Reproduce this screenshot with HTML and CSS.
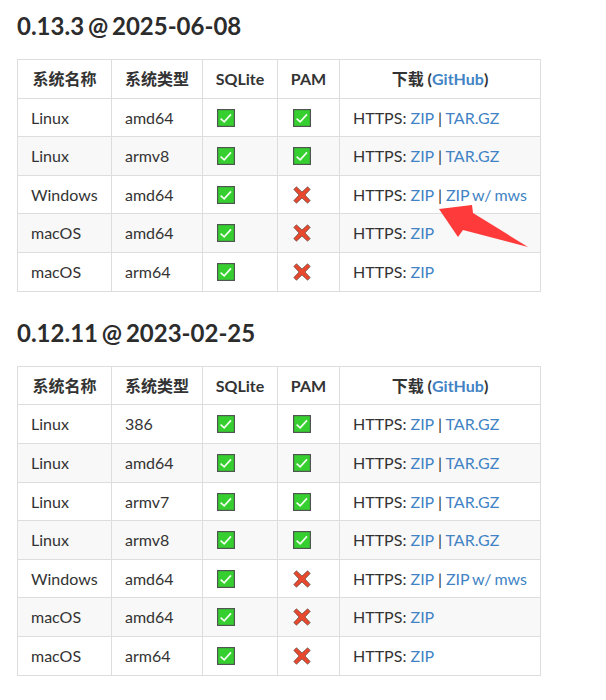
FILE: index.html
```html
<!DOCTYPE html>
<html lang="zh">
<head>
<meta charset="utf-8">
<title>Downloads</title>
<link rel="stylesheet" href="styles.css">
</head>
<body>
<svg width="0" height="0" class="defs">
  <symbol id="yes" viewBox="0 0 18 18">
    <rect x="0.6" y="0.6" width="16.8" height="16.8" fill="#35d02f" stroke="#4f554f" stroke-width="1.2"/>
    <path d="M3.6 9.6 L7.2 12.8 L14 5.4" fill="none" stroke="#f4fff2" stroke-width="1.7"/>
  </symbol>
  <symbol id="no" viewBox="0 0 18 18">
    <path d="M0.8 3.4 L3.4 0.8 L9 6 L14.6 0.8 L17.2 3.4 L12 9 L17.2 14.6 L14.6 17.2 L9 12 L3.4 17.2 L0.8 14.6 L6 9 Z" fill="#e8492e" stroke="#5c4a44" stroke-width="0.7"/>
  </symbol>
</svg>

<section class="release">
  <h2>0.13.3 @ 2025-06-08</h2>
  <table>
    <thead>
      <tr><th class="c1">系统名称</th><th class="c2">系统类型</th><th class="c3">SQLite</th><th class="c4">PAM</th><th class="c5">下载 (<a href="#">GitHub</a>)</th></tr>
    </thead>
    <tbody>
      <tr><td>Linux</td><td>amd64</td><td><svg class="ico"><use href="#yes"/></svg></td><td class="pam"><svg class="ico"><use href="#yes"/></svg></td><td>HTTPS: <a href="#">ZIP</a> | <a href="#">TAR.GZ</a></td></tr>
      <tr><td>Linux</td><td>armv8</td><td><svg class="ico"><use href="#yes"/></svg></td><td class="pam"><svg class="ico"><use href="#yes"/></svg></td><td>HTTPS: <a href="#">ZIP</a> | <a href="#">TAR.GZ</a></td></tr>
      <tr><td>Windows</td><td>amd64</td><td><svg class="ico"><use href="#yes"/></svg></td><td class="pam"><svg class="ico"><use href="#no"/></svg></td><td>HTTPS: <a href="#">ZIP</a> | <a class="mws" href="#">ZIP w/ mws</a></td></tr>
      <tr><td>macOS</td><td>amd64</td><td><svg class="ico"><use href="#yes"/></svg></td><td class="pam"><svg class="ico"><use href="#no"/></svg></td><td>HTTPS: <a href="#">ZIP</a></td></tr>
      <tr><td>macOS</td><td>arm64</td><td><svg class="ico"><use href="#yes"/></svg></td><td class="pam"><svg class="ico"><use href="#no"/></svg></td><td>HTTPS: <a href="#">ZIP</a></td></tr>
    </tbody>
  </table>
</section>

<section class="release">
  <h2>0.12.11 @ 2023-02-25</h2>
  <table>
    <thead>
      <tr><th class="c1">系统名称</th><th class="c2">系统类型</th><th class="c3">SQLite</th><th class="c4">PAM</th><th class="c5">下载 (<a href="#">GitHub</a>)</th></tr>
    </thead>
    <tbody>
      <tr><td>Linux</td><td>386</td><td><svg class="ico"><use href="#yes"/></svg></td><td class="pam"><svg class="ico"><use href="#yes"/></svg></td><td>HTTPS: <a href="#">ZIP</a> | <a href="#">TAR.GZ</a></td></tr>
      <tr><td>Linux</td><td>amd64</td><td><svg class="ico"><use href="#yes"/></svg></td><td class="pam"><svg class="ico"><use href="#yes"/></svg></td><td>HTTPS: <a href="#">ZIP</a> | <a href="#">TAR.GZ</a></td></tr>
      <tr><td>Linux</td><td>armv7</td><td><svg class="ico"><use href="#yes"/></svg></td><td class="pam"><svg class="ico"><use href="#yes"/></svg></td><td>HTTPS: <a href="#">ZIP</a> | <a href="#">TAR.GZ</a></td></tr>
      <tr><td>Linux</td><td>armv8</td><td><svg class="ico"><use href="#yes"/></svg></td><td class="pam"><svg class="ico"><use href="#yes"/></svg></td><td>HTTPS: <a href="#">ZIP</a> | <a href="#">TAR.GZ</a></td></tr>
      <tr><td>Windows</td><td>amd64</td><td><svg class="ico"><use href="#yes"/></svg></td><td class="pam"><svg class="ico"><use href="#no"/></svg></td><td>HTTPS: <a href="#">ZIP</a> | <a class="mws" href="#">ZIP w/ mws</a></td></tr>
      <tr><td>macOS</td><td>amd64</td><td><svg class="ico"><use href="#yes"/></svg></td><td class="pam"><svg class="ico"><use href="#no"/></svg></td><td>HTTPS: <a href="#">ZIP</a></td></tr>
      <tr><td>macOS</td><td>arm64</td><td><svg class="ico"><use href="#yes"/></svg></td><td class="pam"><svg class="ico"><use href="#no"/></svg></td><td>HTTPS: <a href="#">ZIP</a></td></tr>
    </tbody>
  </table>
</section>

<svg class="arrow" width="606" height="300" viewBox="0 0 606 300"><path d="M439 209 L472 205 L473 213 L528 247 L463 230 L458 237 Z" fill="#fe3a3a"/></svg>
</body>
</html>
```
FILE: styles.css
```css
html, body {
  margin: 0;
  background: #fff;
}
body {
  padding: 0 17px;
  font-family: Lato, "Noto Sans CJK SC", sans-serif;
  font-size: 16px;
  line-height: 1.6;
  color: #333;
  position: relative;
  height: 700px;
  box-sizing: border-box;
  overflow: hidden;
}
.defs {
  position: absolute;
}
h2 {
  margin: 0;
  padding-top: 8px;
  height: 59px;
  box-sizing: border-box;
  font-size: 24px;
  line-height: 36px;
  font-weight: 700;
  color: #2c2c2c;
  word-spacing: -2px;
}
.release + .release {
  margin-top: 15.3px;
}
table {
  border-collapse: collapse;
  table-layout: fixed;
}
th, td {
  border: 1px solid #ddd;
  padding: 6px 13px;
  text-align: left;
  white-space: nowrap;
}
th {
  font-weight: 700;
  text-align: center;
  padding-left: 0;
  padding-right: 0;
}
tbody tr:nth-child(even) {
  background: #f8f8f8;
}
.c1 { width: 93px; }
.c2 { width: 90px; }
.c3 { width: 74px; }
.c4 { width: 61px; }
.c5 { width: 198px; }
a {
  color: #4183c4;
  text-decoration: none;
}
.mws {
  word-spacing: -1px;
}
.ico {
  display: inline-block;
  width: 18px;
  height: 18px;
  vertical-align: -3px;
  margin-left: 1px;
}
.pam .ico {
  margin-left: 2px;
}
.arrow {
  position: absolute;
  left: 0;
  top: 0;
}
```
